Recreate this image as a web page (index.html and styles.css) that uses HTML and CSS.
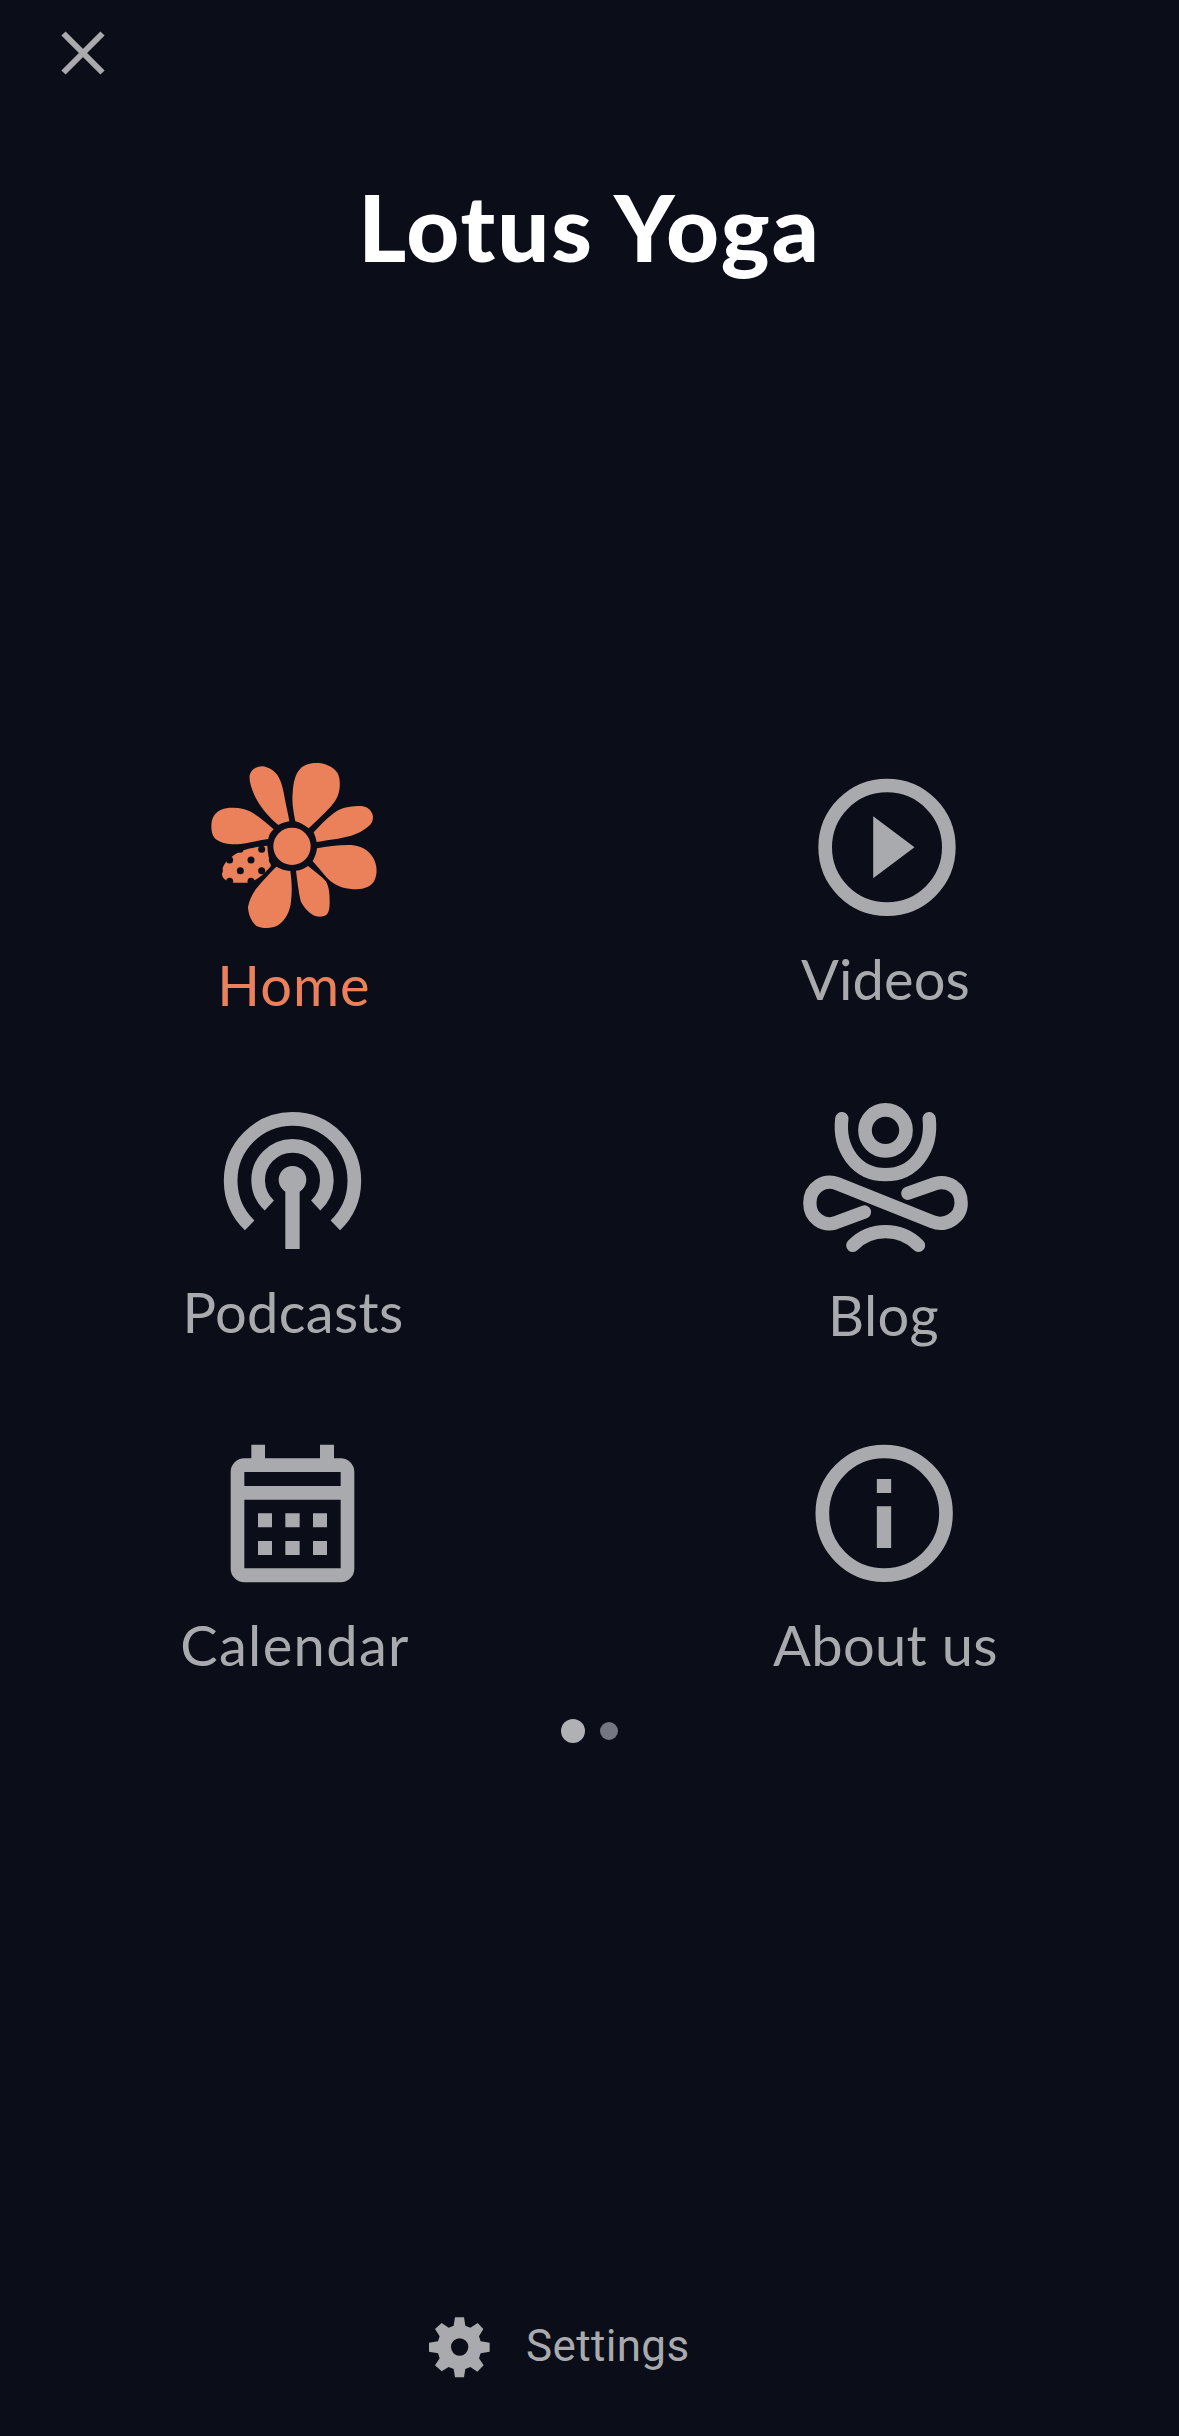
FILE: index.html
```html
<!DOCTYPE html>
<html lang="en">
<head>
<meta charset="utf-8">
<title>Lotus Yoga</title>
<link rel="stylesheet" href="styles.css">
</head>
<body>
<main class="screen">
  <header class="topbar">
    <svg class="close" viewBox="0 0 44 44" aria-label="Close"><path d="M2.500 2.500 41.500 41.500M41.500 2.500 2.500 41.500"/></svg>
  </header>
  <h1 class="title">Lotus Yoga</h1>
  <nav class="menu">
    <a class="item item--home">
      <svg class="icon" viewBox="30 33 510 510">
        <path d="M268 214C260 215 246 219 235 225C210 204 180 172 164 137C153 112 147 93 149 76C152 60 168 49 187 49C204 50 222 62 232 75C245 94 250 121 254 143C258 168 265 192 268 214Z"/>
        <path d="M286 214C281 188 275 157 278 128C280 97 286 70 301 56C318 40 339 38 363 40C382 43 402 54 412 68C420 82 421 103 418 120C414 142 405 155 392 170C370 194 347 215 326 235C314 225 299 217 286 214Z"/>
        <path d="M341 247C359 227 378 207 399 191C418 177 438 170 465 169C489 166 505 172 512 183C520 193 521 205 516 216C511 226 500 234 489 241C468 255 441 262 414 266C392 269 370 272 350 276C348 266 345 256 341 247Z"/>
        <path d="M351 295C383 289 418 284 454 285C482 287 505 300 518 321C532 343 534 373 522 394C512 411 492 417 471 418C440 418 413 411 391 393C374 378 357 354 338 334C343 324 350 309 351 295Z"/>
        <path d="M324 348C340 362 363 377 377 393C388 411 389 434 389 457C389 474 387 488 378 496C366 502 350 501 339 495C325 486 310 471 302 453C295 423 292 391 288 362C301 361 313 356 324 348Z"/>
        <path d="M229 350C241 357 256 362 271 363C275 393 277 423 273 454C270 486 256 511 234 526C214 537 186 536 168 527C153 514 145 491 144 472C147 453 157 429 173 411C190 390 210 369 229 350Z"/>
        <path d="M221 238C211 247 206 258 205 267C182 270 149 279 114 283C82 284 55 276 43 263C34 253 32 229 36 211C40 197 49 185 64 179C81 172 108 172 130 177C163 185 194 214 221 238Z"/>
        <circle cx="276" cy="289" r="56"/>
        <path d="M202 287C175 290 150 294 130 301C108 309 88 324 76 339C67 350 64 366 67 378C70 388 82 395 101 398H143C162 394 180 382 194 368C202 360 208 354 213 347C207 330 203 308 202 287Z"/>
        <g class="hole"><circle cx="153" cy="330" r="10.500"/><circle cx="121" cy="362" r="10.500"/><circle cx="185" cy="298" r="10.500"/><circle cx="120" cy="298" r="10.500"/><circle cx="89" cy="330" r="10.500"/><circle cx="185" cy="362" r="10.500"/><circle cx="217" cy="330" r="10.500"/><circle cx="153" cy="394" r="10.500"/><circle cx="89" cy="394" r="10.500"/><circle cx="58" cy="362" r="10.500"/></g>
      </svg>
      <span class="label">Home</span>
    </a>
    <a class="item item--videos">
      <svg class="icon" viewBox="58.500 3 510 510">
        <circle class="line" cx="319.500" cy="262" r="185.500"/>
        <path d="M278 169 402 262 278 355Z"/>
      </svg>
      <span class="label">Videos</span>
    </a>
    <a class="item item--podcasts">
      <svg class="icon" viewBox="120 12 510 510">
        <path class="line" d="M239 406A185.500 185.500 0 1 1 496 406M298 346.500A103 103 0 1 1 437 346.500"/>
        <path d="M346 305A41.500 41.500 0 1 1 389 305V477H346Z"/>
      </svg>
      <span class="label">Podcasts</span>
    </a>
    <a class="item item--blog">
      <svg class="icon" viewBox="58.500 12 510 510">
        <circle class="line" cx="315" cy="121" r="61.500"/>
        <path class="line line--round" d="M184 86C173 176 227 254 315 254S456 176 446 86M252 366L163 399C128 409 88 385 88 339C88 291 132 266 171 281L455 395C495 411 542 384 542 339C542 292 501 270 464 281L382 310M217 466C270 411 360 411 414 466"/>
      </svg>
      <span class="label">Blog</span>
    </a>
    <a class="item item--calendar">
      <svg class="icon" viewBox="120 -9 510 510">
        <path fill-rule="evenodd" d="M244 44H285V85H450V44H492V85H512A41 41 0 0 1 553 126V416A41 41 0 0 1 512 457H223A41 41 0 0 1 182 416V126A41 41 0 0 1 223 85H244ZM223 126V168H512V126ZM223 209V415H512V209Z"/>
        <path d="M264 250h42v42h-42zM346 250h43v42h-43zM429 250h42v42h-42zM264 333h42v42h-42zM346 333h43v42h-43zM429 333h42v42h-42z"/>
      </svg>
      <span class="label">Calendar</span>
    </a>
    <a class="item item--about">
      <svg class="icon" viewBox="118.500 -9 510 510">
        <circle class="line" cx="371" cy="250" r="185.500"/>
        <path d="M349 147h43v42h-43zM349 229h43v125h-43z"/>
      </svg>
      <span class="label">About us</span>
    </a>
  </nav>
  <div class="dots"><i class="dot dot--on"></i><i class="dot"></i></div>
  <footer class="settings">
    <svg class="gear" viewBox="57 50 183 183"><path fill-rule="evenodd" d="M135 51H162L166 76L181 82L203 68L220 86L207 108L212 123L239 127V154L212 159L207 174L221 195L202 214L181 200L166 206L162 231H135L131 206L116 200L95 213L75 195L89 174L84 159L57 154V127L84 123L89 108L75 86L95 68L116 82L131 76ZM149 114A26 26 0 1 0 149 166A26 26 0 1 0 149 114Z"/></svg>
    <span class="settings-label">Settings</span>
  </footer>
</main>
</body>
</html>
```
FILE: styles.css
```css
* { box-sizing: border-box; }
body { margin: 0; background: #0b0e18; }
.screen {
  width: 1179px;
  height: 2436px;
  display: flex;
  flex-direction: column;
  color: #a9aaad;
  fill: currentColor;
  font-family: Lato, sans-serif;
  overflow: hidden;
}
.topbar { height: 172px; padding: 30.500px 0 0 60.500px; }
.close { display: block; width: 44px; height: 44px; fill: none; stroke: currentColor; stroke-width: 6; }
.title {
  margin: 0;
  height: 589px;
  color: #fff;
  font-size: 92px;
  line-height: 110px;
  font-weight: 900;
  letter-spacing: 2px;
  text-align: center;
}
.menu { display: grid; grid-template-columns: 590px 589px; grid-auto-rows: 333px; }
.item { display: flex; flex-direction: column; align-items: center; gap: 18px; }
.icon { width: 170px; height: 170px; }
.line { fill: none; stroke: currentColor; stroke-width: 41; }
.line--round { stroke-linecap: round; stroke-width: 40; }
.hole { fill: #0b0e18; }
.label { font-size: 56px; line-height: 60px; white-space: nowrap; letter-spacing: 0.35px; }
.item--home { color: #eb815b; gap: 24px; }
.item--home .label { letter-spacing: 1px; margin-right: 2px; }
.item--videos .label { letter-spacing: 0.1px; margin-left: 2px; }
.item--podcasts .label { margin-right: 4px; }
.item--blog { gap: 21px; }
.item--blog .label { margin-right: 2px; }
.item--calendar .label { letter-spacing: 1.35px; }
.item--about .label { margin-left: 2px; }
.dots { display: flex; align-items: center; justify-content: center; gap: 15px; height: 24px; margin-top: -41px; }
.dot { width: 18px; height: 18px; border-radius: 50%; background: #747781; }
.dot--on { width: 24px; height: 24px; background: #b0b1b4; }
.settings { display: flex; align-items: center; gap: 36px; margin: auto 0 58.500px 429px; height: 61px; }
.gear { width: 61px; height: 61px; }
.settings-label { font-family: Roboto, sans-serif; font-size: 44px; line-height: 52px; letter-spacing: 0.35px; margin-top: -2px; }
```
